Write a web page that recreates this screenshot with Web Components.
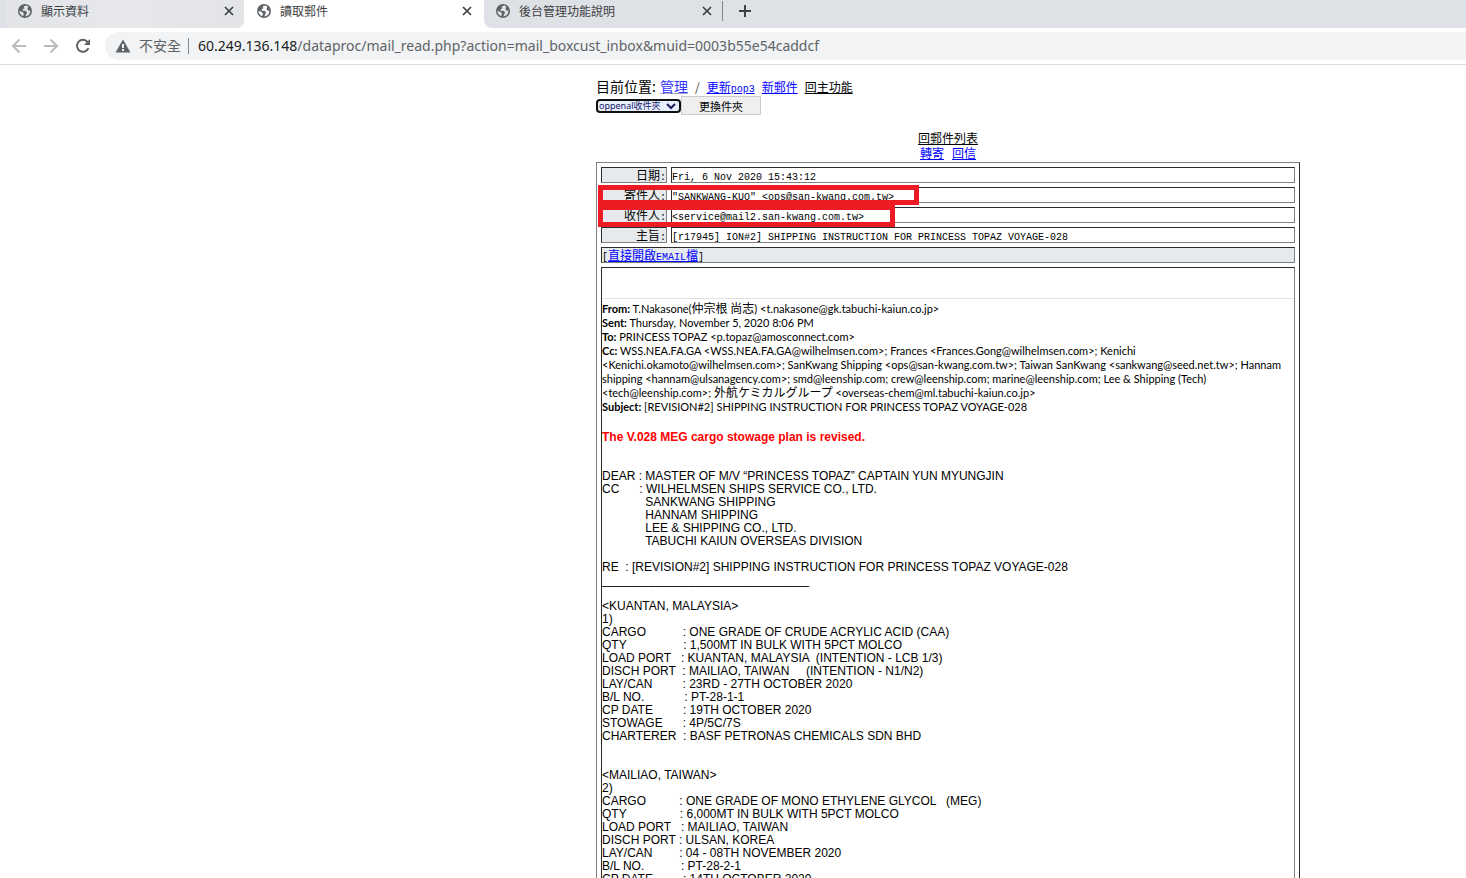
<!DOCTYPE html>
<html lang="zh-Hant">
<head>
<meta charset="utf-8">
<title>讀取郵件</title>
<style>
html, body { height: 100%; margin: 0; }
body { background: #fff; font-family: "Noto Sans", "Noto Sans CJK TC", sans-serif; }
</style>
</head>
<body>
<mail-app></mail-app>

<template id="t-app">
<style>
:host { display: flex; flex-direction: column; height: 100vh; }
.tabs { display: flex; height: 28px; background: #fff; flex: none; }
.group { display: flex; background: #dee1e6; }
.before { border-bottom-right-radius: 8px; padding-left: 6px; }
.after { flex: 1; border-bottom-left-radius: 8px; align-items: center; }
.sep { width: 1px; height: 20px; background: #80868b; margin-bottom: 6px; }
.new { border: 0; background: none; padding: 0; margin: 0 0 6px 15px; width: 14px; height: 14px; }
.new svg { display: block; }
</style>
<nav class="tabs" aria-label="分頁">
  <div class="group before"><browser-tab hover>顯示資料</browser-tab></div>
  <browser-tab active>讀取郵件</browser-tab>
  <div class="group after">
    <browser-tab>後台管理功能說明</browser-tab>
    <span class="sep"></span>
    <button class="new" aria-label="新分頁"><svg width="14" height="14" viewBox="0 0 14 14"><path d="M7 1v12M1 7h12" stroke="#3c4043" stroke-width="2" fill="none"/></svg></button>
  </div>
</nav>
<address-bar></address-bar>
<web-view><mail-page></mail-page></web-view>
</template>

<template id="t-tab">
<style>
:host { display: flex; box-sizing: border-box; width: 238px; height: 28px; padding: 0 9px 6px 12px; align-items: center; font: 12px/16px "Noto Sans CJK TC", sans-serif; color: #3c4043; }
:host([hover]) { background: linear-gradient(90deg, #e2e4e8, #e6e8eb 50%, #e2e4e8); border-bottom-right-radius: 8px; }
:host([active]) { width: 240px; padding-left: 13px; padding-right: 11px; background: #fff; --land: #fff; }
.icon { flex: none; margin-right: 9px; }
.land { fill: var(--land, #dee1e6); }
.title { flex: 1; white-space: nowrap; }
button { border: 0; background: none; padding: 0; width: 12px; height: 12px; }
button svg { display: block; }
</style>
<svg class="icon" width="14" height="14" viewBox="0 0 14 14"><circle cx="7" cy="7" r="7" fill="#5f6368"/><path class="land" d="M8.400 1.500 5.600 2.600 6.400 4.300 4.600 5.200 4.800 6.700 8 7 9.100 8.500 8.200 10.300 7.400 12.500C10.800 12 12.500 9.600 12.400 6.800L10.400 6.400 9.500 4.800 10.300 2.400ZM1.500 6.700 4.600 8 5.900 9.600 5.200 12.200C2.800 11.200 1.400 9.200 1.500 6.700Z"/></svg>
<span class="title"><slot></slot></span>
<button aria-label="關閉"><svg width="12" height="12" viewBox="0 0 12 12"><path d="M2 2l8 8M10 2l-8 8" stroke="#3c4043" stroke-width="1.700" fill="none"/></svg></button>
</template>

<template id="t-address">
<style>
:host { display: flex; flex: none; align-items: center; box-sizing: border-box; height: 37px; padding-left: 11px; border-bottom: 1px solid #dadce0; background: #fff; }
button { border: 0; background: none; padding: 0; width: 16px; height: 16px; margin-right: 16px; flex: none; }
button svg { display: block; }
.reload { margin-right: 14px; }
.box { flex: 1; display: flex; align-items: center; height: 28px; background: #f1f3f4; border-radius: 14px 0 0 14px; padding-left: 10px; color: #5f6368; }
.warn { flex: none; }
.unsafe { font: 14px/18px "Noto Sans CJK TC", sans-serif; margin-left: 8px; padding-bottom: 2px; }
.bar { width: 1px; height: 16px; background: #80868b; margin: 0 9px 0 7px; }
.url { font: 14px/20px "Noto Sans", sans-serif; white-space: nowrap; }
.url b { font-weight: 400; color: #202124; }
</style>
<button aria-label="上一頁"><svg width="16" height="16" viewBox="0 0 16 16"><path d="M15 8H2M8.500 1.500 2 8l6.500 6.500" stroke="#babcbe" stroke-width="2" fill="none"/></svg></button>
<button aria-label="下一頁"><svg width="16" height="16" viewBox="0 0 16 16"><path d="M1 8h13M7.500 1.500 14 8l-6.500 6.500" stroke="#babcbe" stroke-width="2" fill="none"/></svg></button>
<button class="reload" aria-label="重新載入"><svg width="16" height="16" viewBox="0 0 16 16"><path d="M13.500 10.200A6 6 0 1 1 12.600 4" stroke="#5f6368" stroke-width="2" fill="none"/><path d="M15 1v6H9z" fill="#5f6368"/></svg></button>
<div class="box">
  <svg class="warn" width="16" height="16" viewBox="0 0 16 16"><path d="M8 1.500 15.500 14.500H.5Z" fill="#5f6368"/><path d="M8 6v4M8 11v2" stroke="#f1f3f4" stroke-width="2"/></svg>
  <span class="unsafe">不安全</span><span class="bar"></span>
  <span class="url"><b>60.249.136.148</b>/dataproc/mail_read.php?action=mail_boxcust_inbox&amp;muid=0003b55e54caddcf</span>
</div>
</template>

<template id="t-view">
<style>
:host { display: grid; flex: 1; min-height: 0; overflow: auto; scrollbar-width: none; grid-template-columns: 596fr 704fr 166fr; }
::slotted(*) { grid-column: 2; min-width: 0; }
</style>
<slot></slot>
</template>

<template id="t-page">
<style>
:host { display: block; padding-top: 13px; font: 12px/15px "Noto Sans CJK TC", sans-serif; color: #000; }
a { color: #00f; }
a.dark { color: #000; }
.m { font-family: "Liberation Mono", monospace; font-size: 10px; line-height: 0; }
.crumbs { display: flex; align-items: center; height: 16px; white-space: nowrap; }
.crumbs a { margin-right: 7px; }
.here, .crumbs .sect { font-size: 14px; }
.here { margin-right: 4px; }
.crumbs .sect { margin-right: 7px; color: #33f; text-decoration-color: #aac; }
.slash { margin-right: 7px; color: #444; }
form { display: flex; align-items: center; height: 23px; margin: 0; }
select { appearance: none; box-sizing: border-box; width: 85px; height: 14px; margin: 0; padding: 0 0 0 1px; border: 2px solid #101010; border-radius: 4px; font: 9px/10px "Noto Sans", "Noto Sans CJK TC", sans-serif; color: #1a1a6c; background: #e8f0fe url("data:image/svg+xml,%3Csvg xmlns='http://www.w3.org/2000/svg' width='10' height='8'%3E%3Cpath d='M1 2l4 4 4-4' fill='none' stroke='%231a1a5c' stroke-width='2'/%3E%3C/svg%3E") no-repeat right 3px center; }
form button { box-sizing: border-box; width: 80px; height: 19px; padding: 0; border: 1px solid #ccc; background: #efefef; font: 11px/16px "Noto Sans CJK TC", sans-serif; color: #000; }
.actions { display: flex; flex-direction: column; align-items: center; margin-top: 13px; margin-bottom: 2px; }
.actions div { display: flex; gap: 8px; }
</style>
<div class="crumbs">
  <span class="here">目前位置:</span><a class="sect" href="#manage">管理</a><span class="slash">/</span>
  <a href="#pop3">更新<span class="m">pop3</span></a><a href="#new">新郵件</a><a class="dark" href="#main">回主功能</a>
</div>
<form>
  <select aria-label="收件夾"><option>oppenal收件夾</option></select>
  <button type="button">更換件夾</button>
</form>
<div class="actions">
  <a class="dark" href="#list">回郵件列表</a>
  <div><a href="#forward">轉寄</a><a href="#reply">回信</a></div>
</div>
<mail-record></mail-record>
</template>

<template id="t-record">
<style>
:host { display: block; }
table { width: 100%; table-layout: fixed; border-spacing: 4px; border: 1px solid; border-color: #808080 #2c2c2c #2c2c2c #808080; }
col.label { width: 66px; }
th, td { box-sizing: border-box; height: 16px; padding: 0; border: 1px solid; border-color: #2c2c2c #808080 #808080 #2c2c2c; text-align: left; vertical-align: top; font: 12px/14px "Noto Sans CJK TC", sans-serif; white-space: nowrap; }
th { position: relative; background: #e6eaed; text-align: right; }
.m { font-family: "Liberation Mono", monospace; font-size: 10px; line-height: 0; }
td.open { background: #e6eaed; }
td.letter { white-space: normal; }
a { color: #00f; }
</style>
<table>
  <colgroup><col class="label"><col></colgroup>
  <tbody>
  <tr><th scope="row">日期<span class="m">:</span></th><td><span class="m">Fri, 6 Nov 2020 15:43:12</span></td></tr>
  <tr><th scope="row">寄件人<span class="m">:</span><red-mark style="--w:321px;--h:20px"></red-mark></th><td><span class="m">"SANKWANG-KUO" &lt;ops@san-kwang.com.tw&gt;</span></td></tr>
  <tr><th scope="row">收件人<span class="m">:</span><red-mark style="--w:297px;--h:22px"></red-mark></th><td><span class="m">&lt;service@mail2.san-kwang.com.tw&gt;</span></td></tr>
  <tr><th scope="row">主旨<span class="m">:</span></th><td><span class="m">[r17945] ION#2] SHIPPING INSTRUCTION FOR PRINCESS TOPAZ VOYAGE-028</span></td></tr>
  <tr><td class="open" colspan="2"><span class="m">[</span><a href="#eml">直接開啟<span class="m">EMAIL</span>檔</a><span class="m">]</span></td></tr>
  <tr><td class="letter" colspan="2"><mail-letter></mail-letter></td></tr>
  </tbody>
</table>
</template>

<template id="t-mark">
<style>
:host { display: block; position: absolute; z-index: 1; left: -4px; top: -3px; box-sizing: border-box; width: var(--w); height: var(--h); border: 5px solid #ed1c24; pointer-events: none; }
</style>
</template>

<template id="t-letter">
<style>
:host { display: block; color: #000; }
.head { margin-top: 30px; border-top: 1px solid #e1e1e1; padding-top: 3px; font: 11px/14px Lato, "Noto Sans CJK JP", sans-serif; }
.head span { font-family: "Noto Sans CJK JP", sans-serif; font-size: 12px; line-height: 0; }
p { margin: 0; }
.notice { margin-top: 17px; font: bold 12px/13px "Liberation Sans", sans-serif; color: #f00; }
pre { margin: 26px 0 40px; font: 12px/13px "Liberation Sans", sans-serif; }
</style>
<div class="head">
<p><b>From:</b> T.Nakasone(<span>仲宗根 尚志</span>) &lt;t.nakasone@gk.tabuchi-kaiun.co.jp&gt;</p>
<p><b>Sent:</b> Thursday, November 5, 2020 8:06 PM</p>
<p><b>To:</b> PRINCESS TOPAZ &lt;p.topaz@amosconnect.com&gt;</p>
<p><b>Cc:</b> WSS.NEA.FA.GA &lt;WSS.NEA.FA.GA@wilhelmsen.com&gt;; Frances &lt;Frances.Gong@wilhelmsen.com&gt;; Kenichi<br>
&lt;Kenichi.okamoto@wilhelmsen.com&gt;; SanKwang Shipping &lt;ops@san-kwang.com.tw&gt;; Taiwan SanKwang &lt;sankwang@seed.net.tw&gt;; Hannam<br>
shipping &lt;hannam@ulsanagency.com&gt;; smd@leenship.com; crew@leenship.com; marine@leenship.com; Lee &amp; Shipping (Tech)<br>
&lt;tech@leenship.com&gt;; <span>外航ケミカルグループ</span> &lt;overseas-chem@ml.tabuchi-kaiun.co.jp&gt;</p>
<p><b>Subject:</b> [REVISION#2] SHIPPING INSTRUCTION FOR PRINCESS TOPAZ VOYAGE-028</p>
</div>
<p class="notice">The V.028 MEG cargo stowage plan is revised.</p>
<pre>DEAR : MASTER OF M/V “PRINCESS TOPAZ” CAPTAIN YUN MYUNGJIN
CC      : WILHELMSEN SHIPS SERVICE CO., LTD.
             SANKWANG SHIPPING
             HANNAM SHIPPING
             LEE &amp; SHIPPING CO., LTD.
             TABUCHI KAIUN OVERSEAS DIVISION

RE  : [REVISION#2] SHIPPING INSTRUCTION FOR PRINCESS TOPAZ VOYAGE-028
_______________________________

&lt;KUANTAN, MALAYSIA&gt;
1)
CARGO           : ONE GRADE OF CRUDE ACRYLIC ACID (CAA)
QTY                 : 1,500MT IN BULK WITH 5PCT MOLCO
LOAD PORT   : KUANTAN, MALAYSIA  (INTENTION - LCB 1/3)
DISCH PORT  : MAILIAO, TAIWAN     (INTENTION - N1/N2)
LAY/CAN         : 23RD - 27TH OCTOBER 2020
B/L NO.            : PT-28-1-1
CP DATE         : 19TH OCTOBER 2020
STOWAGE      : 4P/5C/7S
CHARTERER  : BASF PETRONAS CHEMICALS SDN BHD


&lt;MAILIAO, TAIWAN&gt;
2)
CARGO          : ONE GRADE OF MONO ETHYLENE GLYCOL   (MEG)
QTY                : 6,000MT IN BULK WITH 5PCT MOLCO
LOAD PORT   : MAILIAO, TAIWAN
DISCH PORT : ULSAN, KOREA
LAY/CAN        : 04 - 08TH NOVEMBER 2020
B/L NO.           : PT-28-2-1
CP DATE         : 14TH OCTOBER 2020</pre>
</template>

<script>
const define = (name, templateId) => customElements.define(name, class extends HTMLElement {
  constructor() {
    super();
    this.attachShadow({ mode: 'open' })
      .append(document.getElementById(templateId).content.cloneNode(true));
  }
});
define('red-mark', 't-mark');
define('mail-letter', 't-letter');
define('mail-record', 't-record');
define('mail-page', 't-page');
define('web-view', 't-view');
define('browser-tab', 't-tab');
define('address-bar', 't-address');
define('mail-app', 't-app');
</script>
</body>
</html>
